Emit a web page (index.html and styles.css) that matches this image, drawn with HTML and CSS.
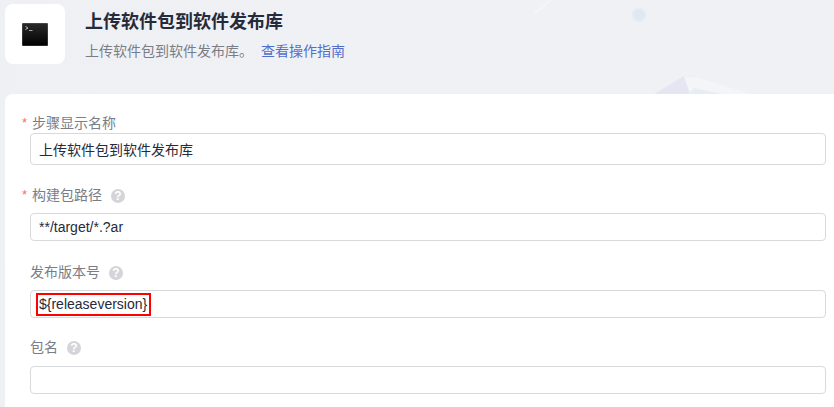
FILE: index.html
```html
<!DOCTYPE html>
<html lang="zh">
<head>
<meta charset="utf-8">
<title>上传软件包到软件发布库</title>
<link rel="stylesheet" href="styles.css">
</head>
<body>
<div class="page">
  <svg class="decor" width="834" height="94" viewBox="0 0 834 94" aria-hidden="true">
    <defs>
      <radialGradient id="dot"><stop offset="0" stop-color="#dde8f3"/><stop offset="0.6" stop-color="#dfe8f2"/><stop offset="1" stop-color="#f0f0f4"/></radialGradient>
    </defs>
    <circle cx="639" cy="15" r="8" fill="url(#dot)"/>
    <polygon points="654,94 684,76 690,76 700,94" fill="#e4e7f2"/>
    <polygon points="684,76 700,78 750,94 690,94" fill="#f3f5f8"/>
    <polygon points="688,94 694,88 722,94" fill="#e6edf5"/>
    <polygon points="534,12 549,0 552,0 536,14" fill="#f5f5f8"/>
  </svg>
  <header class="head">
    <div class="logo">
      <svg width="26" height="23" viewBox="0 0 26 23" aria-hidden="true">
        <defs><linearGradient id="term" x1="0" y1="0" x2="0" y2="1"><stop offset="0" stop-color="#2a2a2c"/><stop offset="1" stop-color="#000"/></linearGradient></defs>
        <rect x="0" y="0" width="26" height="23" rx="1" fill="url(#term)" stroke="#8a8a8a" stroke-width="0.6"/>
        <path d="M3.5 3.5l2.5 1.5-2.5 1.5" fill="none" stroke="#e0e0e0" stroke-width="0.8"/>
        <path d="M7 7.5h3.5" stroke="#c8c8c8" stroke-width="0.8"/>
      </svg>
    </div>
    <div class="head-text">
      <h1 class="title">上传软件包到软件发布库</h1>
      <p class="desc">上传软件包到软件发布库。<a class="guide" href="#">查看操作指南</a></p>
    </div>
  </header>
  <main class="card">
    <div class="field first">
      <label class="label req"><span class="star">*</span>步骤显示名称</label>
      <input class="input tall" type="text" value="上传软件包到软件发布库">
    </div>
    <div class="field second">
      <label class="label req"><span class="star">*</span>构建包路径<span class="help">?</span></label>
      <input class="input" type="text" value="**/target/*.?ar">
    </div>
    <div class="field third">
      <label class="label">发布版本号<span class="help">?</span></label>
      <div class="input-wrap">
        <input class="input" type="text" value="${releaseversion}">
        <span class="mark"></span>
      </div>
    </div>
    <div class="field fourth">
      <label class="label">包名<span class="help">?</span></label>
      <input class="input" type="text" value="">
    </div>
  </main>
</div>
</body>
</html>
```
FILE: styles.css
```css
* { box-sizing: border-box; }
html, body { margin: 0; padding: 0; }
body {
  width: 834px;
  height: 407px;
  overflow: hidden;
  background: #f0f0f4;
  font-family: "Liberation Sans", "Noto Sans CJK SC", sans-serif;
}
.page {
  position: relative;
  height: 407px;
  padding: 4px 0 0 5px;
  background: linear-gradient(100deg, #eef0f4 0%, #f0f1f4 45%, #f1f1f4 100%);
}
.decor { position: absolute; left: 0; top: 0; }
.head {
  position: relative;
  display: flex;
  height: 90px;
  gap: 20px;
}
.logo {
  width: 60px;
  height: 60px;
  display: flex;
  align-items: center;
  justify-content: center;
  background: #fff;
  border-radius: 8px;
}
.head-text { padding-top: 5px; }
.title {
  margin: 0;
  font-size: 18px;
  line-height: 26px;
  font-weight: 700;
  color: #252b3a;
}
.desc {
  margin: 5px 0 0;
  font-size: 14px;
  line-height: 22px;
  color: #7a7d85;
}
.guide {
  margin-left: 8px;
  color: #526ecc;
  text-decoration: none;
}
.card {
  position: relative;
  height: 313px;
  padding: 17px 8px 0 25px;
  background: #fff;
  border-radius: 8px 0 0 0;
}
.field { display: flex; flex-direction: column; }
.second { margin-top: 18px; }
.third { margin-top: 19px; }
.fourth { margin-top: 17px; }
.label {
  display: flex;
  align-items: center;
  height: 22px;
  font-size: 14px;
  color: #7a7d85;
}
.second .label, .third .label { margin-bottom: 8px; }
.fourth .label { margin-bottom: 9px; }
.req { position: relative; padding-left: 2px; }
.star {
  position: absolute;
  left: -8px;
  top: 4px;
  color: #f66f6a;
  font-size: 13px;
}
.help {
  display: inline-flex;
  align-items: center;
  justify-content: center;
  width: 14px;
  height: 14px;
  margin-top: 3px;
  margin-left: 9px;
  border-radius: 50%;
  background: #d4d5d8;
  color: #fff;
  font-size: 12px;
  font-weight: 700;
}
.input {
  display: block;
  width: 100%;
  height: 28px;
  padding: 0 8px;
  border: 1px solid #d8d9dc;
  border-radius: 4px;
  background: #fff;
  font-family: inherit;
  font-size: 14px;
  color: #252b3a;
  outline: none;
}
.tall { height: 32px; }
.input-wrap { position: relative; }
.mark {
  position: absolute;
  left: 6px;
  top: 3px;
  width: 115px;
  height: 23px;
  border: 2px solid #f00;
}
```
